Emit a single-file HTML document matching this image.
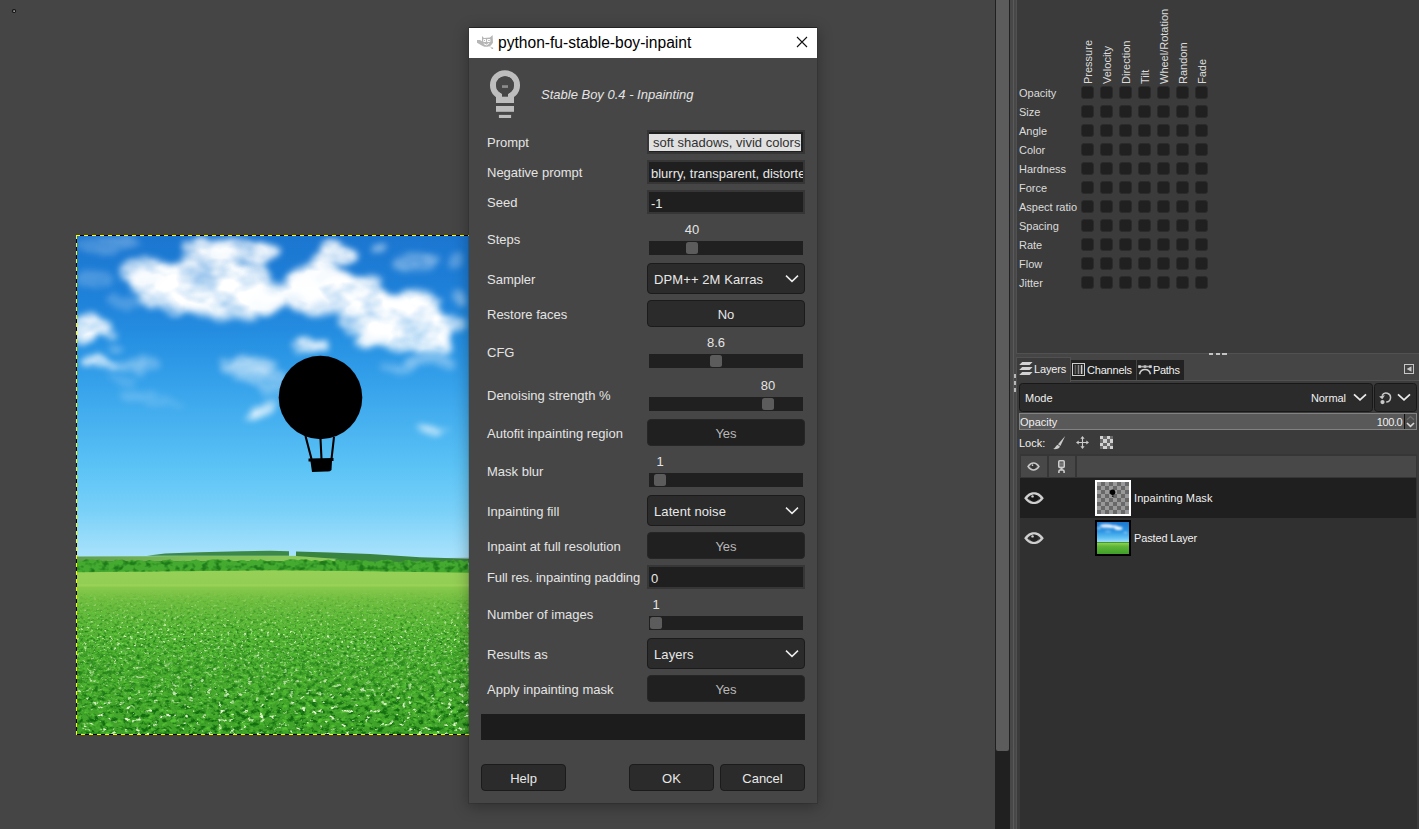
<!DOCTYPE html>
<html>
<head>
<meta charset="utf-8">
<title>python-fu-stable-boy-inpaint</title>
<style>
html,body{margin:0;padding:0;}
body{width:1419px;height:829px;overflow:hidden;background:#454545;position:relative;font-family:"Liberation Sans",sans-serif;font-size:13px;color:#e0e0e0;}
.abs{position:absolute;}
div,span{box-sizing:border-box;}
/* ---------- dialog ---------- */
#dlg{position:absolute;left:469px;top:28px;width:348px;height:775px;background:#464646;box-shadow:0 -1px 0 0 rgba(0,0,0,.35),0 0 0 1px rgba(0,0,0,.10),0 3px 14px 1px rgba(0,0,0,.30);}
#tbar{position:absolute;left:0;top:0;width:348px;height:30px;background:#fff;color:#000;}
#tbar .t{position:absolute;left:29px;top:5px;font-size:15.6px;line-height:20px;white-space:nowrap;color:#000;}
.lbl{position:absolute;left:18px;white-space:nowrap;line-height:16px;height:16px;color:#e4e4e4;}
.ent{position:absolute;left:178px;width:158px;height:24px;background:#1f1f1f;border:2px solid #363636;color:#e8e8e8;overflow:hidden;white-space:nowrap;line-height:23px;padding-left:2px;}
.btn{position:absolute;left:178px;width:158px;height:27px;background:#202020;border:1px solid #262626;border-radius:4px;color:#b8b8b8;text-align:center;line-height:27px;}
.btn.off{background:#2b2b2b;border-color:#1b1b1b;color:#e6e6e6;}
.cmb{position:absolute;left:178px;width:158px;height:31px;background:#2b2b2b;border:1px solid #1b1b1b;border-radius:4px;color:#e8e8e8;line-height:32px;letter-spacing:0.1px;padding-left:6px;white-space:nowrap;}
.cmb svg{position:absolute;right:5px;top:10px;}
.trk{position:absolute;left:180px;width:154px;height:14px;background:#202020;}
.hnd{position:absolute;top:1px;width:12px;height:12px;background:#5c5c5c;border-radius:2.5px;}
.val{position:absolute;width:40px;text-align:center;line-height:16px;height:16px;color:#e4e4e4;}
.dbtn{position:absolute;top:736px;width:85px;height:27px;background:#2b2b2b;border:1px solid #1b1b1b;border-radius:4px;color:#e8e8e8;text-align:center;line-height:28px;}
/* ---------- right dock ---------- */
#dock{position:absolute;left:1017px;top:0;width:402px;height:829px;background:#3b3b3b;}
.dl{position:absolute;left:2px;font-size:11px;line-height:14px;color:#dcdcdc;white-space:nowrap;}
.cb{position:absolute;width:13px;height:13px;background:#202020;border:1px solid #2b2b2b;border-radius:3px;}
.vt{position:absolute;font-size:11px;line-height:14px;color:#dcdcdc;white-space:nowrap;transform-origin:0 0;transform:rotate(-90deg);}
</style>
</head>
<body>
<!-- canvas cursor dot -->
<svg class="abs" style="left:11px;top:8px" width="6" height="6" viewBox="0 0 6 6"><circle cx="3" cy="3" r="2.1" fill="#141414"/><circle cx="3.1" cy="3.1" r="0.85" fill="#c4c4c4"/></svg>
<svg class="abs" style="left:77px;top:236px" width="392" height="498" viewBox="0 0 392 498">
<defs>
<linearGradient id="sky" x1="0" y1="0" x2="0" y2="1">
<stop offset="0" stop-color="#1b76d0"/><stop offset="0.128" stop-color="#1f82da"/><stop offset="0.209" stop-color="#2690e2"/><stop offset="0.289" stop-color="#34a0ea"/>
<stop offset="0.38" stop-color="#48b2f0"/><stop offset="0.47" stop-color="#5dc4f6"/><stop offset="0.55" stop-color="#78d0f8"/><stop offset="0.62" stop-color="#9edefb"/><stop offset="0.645" stop-color="#a8e2fb"/><stop offset="1" stop-color="#a8e2fb"/>
</linearGradient>
<linearGradient id="grs" x1="0" y1="0" x2="0" y2="1">
<stop offset="0" stop-color="#97d057"/><stop offset="0.088" stop-color="#93ce54"/><stop offset="0.097" stop-color="#9dd45b"/><stop offset="0.112" stop-color="#88c94c"/><stop offset="0.188" stop-color="#72bf41"/><stop offset="0.309" stop-color="#5fb738"/><stop offset="0.503" stop-color="#4fae31"/><stop offset="1" stop-color="#3fa229"/>
</linearGradient>
<linearGradient id="ff" x1="0" y1="0" x2="1" y2="0"><stop offset="0" stop-color="#5f9e50"/><stop offset="0.45" stop-color="#7fbe58"/><stop offset="1" stop-color="#90cc5e"/></linearGradient>
<filter id="cl" color-interpolation-filters="sRGB" x="-5%" y="-5%" width="110%" height="110%">
<feTurbulence type="fractalNoise" baseFrequency="0.03" numOctaves="4" seed="4" result="n"/>
<feDisplacementMap in="SourceGraphic" in2="n" scale="20" xChannelSelector="R" yChannelSelector="G" result="d"/>
<feGaussianBlur in="d" stdDeviation="3.2" result="b"/>
<feTurbulence type="fractalNoise" baseFrequency="0.028 0.04" numOctaves="3" seed="9" result="n2"/>
<feColorMatrix in="n2" type="matrix" values="0 0 0 0 1  0 0 0 0 1  0 0 0 0 1  0.9 0 0 0 0.48" result="m"/>
<feComposite in="b" in2="m" operator="in"/>
</filter>
<filter id="gn" color-interpolation-filters="sRGB" x="0" y="0" width="100%" height="100%">
<feTurbulence type="fractalNoise" baseFrequency="0.3 0.42" numOctaves="2" seed="11" result="t"/>
<feColorMatrix in="t" type="matrix" values="0 0 0 0 0.09  0 0 0 0 0.47  0 0 0 0 0.07  0 3.0 0 0 -1.4" result="dk"/>
<feColorMatrix in="t" type="matrix" values="0 0 0 0 0.38  0 0 0 0 0.80  0 0 0 0 0.24  4.0 0 0 0 -2.0" result="lt"/>
<feColorMatrix in="t" type="matrix" values="0 0 0 0 0.86  0 0 0 0 0.95  0 0 0 0 0.76  0 0 6 0 -3.7" result="fw"/>
<feMerge result="mm"><feMergeNode in="dk"/><feMergeNode in="lt"/><feMergeNode in="fw"/></feMerge>
<feComposite in="mm" in2="SourceGraphic" operator="in"/>
</filter>
<filter id="fl" color-interpolation-filters="sRGB" x="0" y="0" width="100%" height="100%">
<feTurbulence type="fractalNoise" baseFrequency="0.17 0.23" numOctaves="3" seed="23" result="t"/>
<feColorMatrix in="t" type="matrix" values="0 0 0 0 0.07  0 0 0 0 0.43  0 0 0 0 0.06  0 4.2 0 0 -1.95" result="dk"/>
<feColorMatrix in="t" type="matrix" values="0 0 0 0 0.33  0 0 0 0 0.76  0 0 0 0 0.20  4.0 0 0 0 -2.15" result="lt"/>
<feColorMatrix in="t" type="matrix" values="0 0 0 0 0.88  0 0 0 0 0.96  0 0 0 0 0.80  0 0 7.5 0 -4.8" result="fw"/>
<feMerge result="mm"><feMergeNode in="dk"/><feMergeNode in="lt"/><feMergeNode in="fw"/></feMerge>
<feComposite in="mm" in2="SourceGraphic" operator="in"/>
</filter>
<filter id="tr" color-interpolation-filters="sRGB" x="0" y="0" width="100%" height="100%">
<feTurbulence type="fractalNoise" baseFrequency="0.16 0.2" numOctaves="2" seed="5" result="t"/>
<feColorMatrix in="t" type="matrix" values="0 0 0 0 0.12  0 0 0 0 0.48  0 0 0 0 0.10  0 3.5 0 0 -1.6"/>
<feComposite in2="SourceGraphic" operator="in"/>
</filter>
<linearGradient id="fade" x1="0" y1="0" x2="0" y2="1"><stop offset="0" stop-color="#fff" stop-opacity="0"/><stop offset="0.04" stop-color="#fff" stop-opacity="0"/><stop offset="0.17" stop-color="#fff" stop-opacity=".4"/><stop offset="0.37" stop-color="#fff" stop-opacity="1"/><stop offset="0.5" stop-color="#fff" stop-opacity=".8"/><stop offset="0.85" stop-color="#fff" stop-opacity=".15"/><stop offset="1" stop-color="#fff" stop-opacity="0"/></linearGradient>
<linearGradient id="fade2" x1="0" y1="0" x2="0" y2="1"><stop offset="0" stop-color="#fff" stop-opacity="0"/><stop offset="0.3" stop-color="#fff" stop-opacity="0"/><stop offset="0.6" stop-color="#fff" stop-opacity=".6"/><stop offset="0.85" stop-color="#fff" stop-opacity="1"/><stop offset="1" stop-color="#fff" stop-opacity="1"/></linearGradient>
<mask id="gm"><rect x="0" y="348" width="392" height="150" fill="url(#fade)"/></mask>
<mask id="gm2"><rect x="0" y="348" width="392" height="150" fill="url(#fade2)"/></mask>
</defs>
<rect width="392" height="498" fill="url(#sky)"/>
<g filter="url(#cl)" fill="#fff"><ellipse cx="83" cy="45" rx="30" ry="16" opacity="0.95"/><ellipse cx="113" cy="51" rx="36" ry="20" opacity="1"/><ellipse cx="145" cy="56" rx="40" ry="20" opacity="1"/><ellipse cx="178" cy="64" rx="30" ry="16" opacity="0.95"/><ellipse cx="128" cy="36" rx="40" ry="14" opacity="0.9"/><ellipse cx="63" cy="34" rx="22" ry="10" opacity="0.7"/><ellipse cx="163" cy="42" rx="34" ry="14" opacity="0.9"/><ellipse cx="193" cy="54" rx="20" ry="14" opacity="0.8"/><ellipse cx="103" cy="64" rx="40" ry="12" opacity="0.75"/><ellipse cx="153" cy="74" rx="40" ry="10" opacity="0.6"/><ellipse cx="128" cy="10" rx="20" ry="7" opacity="0.85"/><ellipse cx="158" cy="14" rx="32" ry="10" opacity="0.95"/><ellipse cx="185" cy="20" rx="18" ry="9" opacity="0.85"/><ellipse cx="138" cy="22" rx="30" ry="8" opacity="0.7"/><ellipse cx="261" cy="18" rx="18" ry="10" opacity="1"/><ellipse cx="248" cy="24" rx="13" ry="8" opacity="0.85"/><ellipse cx="243" cy="48" rx="34" ry="18" opacity="0.95"/><ellipse cx="275" cy="56" rx="30" ry="18" opacity="0.95"/><ellipse cx="223" cy="58" rx="22" ry="16" opacity="0.9"/><ellipse cx="258" cy="70" rx="36" ry="12" opacity="0.8"/><ellipse cx="293" cy="44" rx="14" ry="9" opacity="0.65"/><ellipse cx="235" cy="34" rx="18" ry="10" opacity="0.8"/><ellipse cx="322" cy="82" rx="44" ry="24" opacity="1"/><ellipse cx="298" cy="69" rx="26" ry="14" opacity="0.9"/><ellipse cx="348" cy="94" rx="30" ry="20" opacity="0.95"/><ellipse cx="363" cy="109" rx="16" ry="10" opacity="0.8"/><ellipse cx="308" cy="102" rx="28" ry="12" opacity="0.8"/><ellipse cx="338" cy="64" rx="26" ry="10" opacity="0.75"/><ellipse cx="378" cy="86" rx="12" ry="6" opacity="0.7"/><ellipse cx="353" cy="124" rx="26" ry="8" opacity="0.35"/><ellipse cx="323" cy="132" rx="22" ry="7" opacity="0.25"/><ellipse cx="277" cy="88" rx="18" ry="11" opacity="0.85"/><ellipse cx="291" cy="104" rx="16" ry="8" opacity="0.7"/><ellipse cx="13" cy="92" rx="20" ry="9" opacity="0.95"/><ellipse cx="7" cy="101" rx="11" ry="7" opacity="0.8"/><ellipse cx="33" cy="98" rx="9" ry="5" opacity="0.5"/><ellipse cx="41" cy="113" rx="7" ry="3" opacity="0.4"/><ellipse cx="23" cy="127" rx="20" ry="6" opacity="0.8"/><ellipse cx="11" cy="125" rx="10" ry="5" opacity="0.7"/><ellipse cx="53" cy="126" rx="16" ry="5" opacity="0.35"/><ellipse cx="68" cy="132" rx="14" ry="6" opacity="0.25"/><ellipse cx="239" cy="109" rx="17" ry="7" opacity="0.85"/><ellipse cx="225" cy="114" rx="10" ry="5" opacity="0.5"/><ellipse cx="173" cy="130" rx="26" ry="8" opacity="0.5"/><ellipse cx="185" cy="142" rx="30" ry="9" opacity="0.4"/><ellipse cx="163" cy="122" rx="14" ry="5" opacity="0.45"/><ellipse cx="198" cy="152" rx="18" ry="6" opacity="0.3"/><ellipse cx="182" cy="174" rx="12" ry="5" opacity="0.7"/><ellipse cx="193" cy="168" rx="8" ry="5" opacity="0.45"/><ellipse cx="175" cy="178" rx="8" ry="3" opacity="0.5"/><ellipse cx="351" cy="195" rx="13" ry="6" opacity="0.6"/><ellipse cx="343" cy="191" rx="7" ry="4" opacity="0.4"/><ellipse cx="368" cy="192" rx="8" ry="3" opacity="0.25"/><ellipse cx="303" cy="11" rx="11" ry="6" opacity="0.45"/><ellipse cx="337" cy="28" rx="18" ry="8" opacity="0.35"/><ellipse cx="351" cy="22" rx="10" ry="5" opacity="0.3"/><ellipse cx="378" cy="26" rx="8" ry="10" opacity="0.25"/><ellipse cx="383" cy="64" rx="8" ry="6" opacity="0.4"/><ellipse cx="33" cy="9" rx="30" ry="8" opacity="0.25"/><ellipse cx="18" cy="44" rx="20" ry="10" opacity="0.2"/><ellipse cx="48" cy="64" rx="20" ry="6" opacity="0.2"/><ellipse cx="63" cy="159" rx="22" ry="7" opacity="0.18"/><ellipse cx="88" cy="169" rx="20" ry="5" opacity="0.15"/><ellipse cx="43" cy="144" rx="18" ry="6" opacity="0.15"/></g>
<!-- distant hills -->
<rect x="0" y="322.79999999999995" width="392" height="4" fill="#3f9434"/>
<path d="M0 320.6 L70 320.20000000000005 L150 319.79999999999995 L250 320 L262 325 L0 325 Z" fill="url(#ff)"/>
<path d="M338 322.79999999999995 L392 321.4 L392 324 L338 324 Z" fill="#9fbcc4"/>
<path d="M70 319.79999999999995 L88 317.6 L123 316.20000000000005 L163 315.20000000000005 L193 314.70000000000005 L212 315.29999999999995 L212 319.79999999999995 Z" fill="#3d8842"/>
<path d="M219 315.5 L253 316.5 L293 318 L343 321.20000000000005 L392 322.79999999999995 L392 326 L300 326 L262 323 L219 320 Z" fill="#38833d"/>
<!-- grass -->
<rect x="0" y="333" width="392" height="165" fill="url(#grs)"/>
<rect x="0" y="348" width="392" height="150" fill="#000" filter="url(#gn)" mask="url(#gm)"/>
<rect x="0" y="348" width="392" height="150" fill="#000" filter="url(#fl)" mask="url(#gm2)"/>
<!-- tree line -->
<path id="trp" d="M0.0 336.3 L0.0 324.1 L2.8 325.0 L5.4 324.7 L8.7 323.5 L12.2 323.4 L15.6 323.5 L18.2 324.4 L22.4 323.6 L25.3 324.9 L29.7 324.8 L33.0 325.8 L35.6 325.5 L38.7 323.7 L41.4 324.1 L45.6 323.8 L49.2 325.0 L52.5 324.7 L55.1 323.5 L58.0 325.1 L61.4 324.1 L65.0 324.5 L68.1 325.4 L72.0 323.9 L75.7 324.7 L79.9 325.2 L83.0 325.8 L85.8 324.4 L89.8 323.7 L93.2 323.4 L97.1 325.3 L100.7 325.6 L103.9 325.1 L107.5 324.8 L111.0 325.5 L115.3 324.5 L119.2 323.5 L123.1 325.0 L127.6 325.4 L130.6 324.3 L134.5 323.4 L137.9 323.7 L140.6 323.5 L144.7 323.6 L147.7 324.3 L151.9 323.5 L155.3 324.7 L159.6 325.4 L163.8 324.0 L167.1 324.2 L171.4 325.8 L174.2 323.8 L177.2 323.9 L180.6 324.8 L183.7 323.3 L187.0 324.3 L190.6 325.8 L194.5 324.6 L198.2 325.1 L200.8 325.6 L204.9 325.6 L209.0 324.3 L212.3 323.6 L216.1 323.5 L218.7 323.8 L221.5 324.2 L224.1 323.3 L226.9 323.6 L230.2 323.4 L234.4 324.9 L237.2 324.0 L240.4 324.2 L243.2 325.5 L247.6 324.5 L251.1 323.5 L253.8 324.2 L256.8 325.5 L259.7 323.4 L264.1 324.7 L266.9 324.7 L269.4 324.7 L273.9 325.5 L277.8 324.0 L281.0 323.7 L285.0 324.7 L289.1 324.2 L292.0 325.4 L296.5 325.5 L300.6 325.4 L304.6 323.9 L308.1 324.2 L310.7 323.4 L313.8 324.0 L317.6 325.8 L321.0 325.7 L325.5 325.8 L328.7 323.9 L331.7 323.8 L334.6 324.9 L338.9 325.5 L342.4 325.0 L346.5 323.5 L350.3 325.7 L354.3 325.3 L357.8 323.8 L361.9 324.2 L366.0 325.8 L369.3 324.3 L373.7 325.2 L376.5 323.6 L379.3 325.7 L383.4 323.7 L387.6 325.8 L391.4 324.2 L392.0 336.8 L294.0 335.2 L196.0 334.3 L98.0 335.2 Z" fill="#44ab30"/>
<path d="M0.0 336.3 L0.0 324.1 L2.8 325.0 L5.4 324.7 L8.7 323.5 L12.2 323.4 L15.6 323.5 L18.2 324.4 L22.4 323.6 L25.3 324.9 L29.7 324.8 L33.0 325.8 L35.6 325.5 L38.7 323.7 L41.4 324.1 L45.6 323.8 L49.2 325.0 L52.5 324.7 L55.1 323.5 L58.0 325.1 L61.4 324.1 L65.0 324.5 L68.1 325.4 L72.0 323.9 L75.7 324.7 L79.9 325.2 L83.0 325.8 L85.8 324.4 L89.8 323.7 L93.2 323.4 L97.1 325.3 L100.7 325.6 L103.9 325.1 L107.5 324.8 L111.0 325.5 L115.3 324.5 L119.2 323.5 L123.1 325.0 L127.6 325.4 L130.6 324.3 L134.5 323.4 L137.9 323.7 L140.6 323.5 L144.7 323.6 L147.7 324.3 L151.9 323.5 L155.3 324.7 L159.6 325.4 L163.8 324.0 L167.1 324.2 L171.4 325.8 L174.2 323.8 L177.2 323.9 L180.6 324.8 L183.7 323.3 L187.0 324.3 L190.6 325.8 L194.5 324.6 L198.2 325.1 L200.8 325.6 L204.9 325.6 L209.0 324.3 L212.3 323.6 L216.1 323.5 L218.7 323.8 L221.5 324.2 L224.1 323.3 L226.9 323.6 L230.2 323.4 L234.4 324.9 L237.2 324.0 L240.4 324.2 L243.2 325.5 L247.6 324.5 L251.1 323.5 L253.8 324.2 L256.8 325.5 L259.7 323.4 L264.1 324.7 L266.9 324.7 L269.4 324.7 L273.9 325.5 L277.8 324.0 L281.0 323.7 L285.0 324.7 L289.1 324.2 L292.0 325.4 L296.5 325.5 L300.6 325.4 L304.6 323.9 L308.1 324.2 L310.7 323.4 L313.8 324.0 L317.6 325.8 L321.0 325.7 L325.5 325.8 L328.7 323.9 L331.7 323.8 L334.6 324.9 L338.9 325.5 L342.4 325.0 L346.5 323.5 L350.3 325.7 L354.3 325.3 L357.8 323.8 L361.9 324.2 L366.0 325.8 L369.3 324.3 L373.7 325.2 L376.5 323.6 L379.3 325.7 L383.4 323.7 L387.6 325.8 L391.4 324.2 L392.0 336.8 L294.0 335.2 L196.0 334.3 L98.0 335.2 Z" fill="#000" filter="url(#tr)"/>

<!-- balloon mask -->
<circle cx="243.5" cy="161.5" r="41.8" fill="#000"/>
<path d="M228.5 200 L234.5 223 M243.5 203 L244.5 223 M257 201 L254.5 223" stroke="#000" stroke-width="2.1" fill="none"/>
<path d="M231.5 222.5 L256.5 222 L256.5 225 L255 225 L254.5 234 Q253 236 249 235.5 L235 236 L233.5 225.5 L231.5 225.5 Z" fill="#000"/>
</svg>
<svg class="abs" style="left:76px;top:235px" width="393" height="500" viewBox="0 0 393 500" shape-rendering="crispEdges"><path d="M393 0.5 H0.5 V499.5 H393" fill="none" stroke="#000" stroke-width="1"/><path d="M0 0.5 H393" fill="none" stroke="#ffff00" stroke-width="1" stroke-dasharray="4 4"/><path d="M0.5 0 V499.5 H393" fill="none" stroke="#ffff00" stroke-width="1" stroke-dasharray="4 4"/></svg>
<!-- canvas scrollbar -->
<div class="abs" style="left:995px;top:0;width:15px;height:829px;background:#202020;"></div>
<div class="abs" style="left:996px;top:0;width:13px;height:751px;background:#5c5c5c;border-radius:0 0 2px 2px;"></div>
<div class="abs" style="left:1010px;top:0;width:7px;height:829px;background:#484848;"></div>
<div class="abs" style="left:1013px;top:0;width:1px;height:829px;background:#5a5a5a;"></div>
<div class="abs" style="left:1016px;top:0;width:1px;height:354px;background:#555;"></div>
<div class="abs" style="left:1016px;top:354px;width:1px;height:3px;background:#454545;"></div>
<div class="abs" style="left:1016px;top:357px;width:1px;height:472px;background:#515151;"></div>
<!-- RIGHT DOCK -->
<div id="dock">
<div class="abs" style="left:-1px;top:0;width:1px;height:354px;background:#515151"></div>
<div class="abs" style="left:0;top:353px;width:402px;height:1px;background:#515151"></div>
<div class="vt" style="left:64px;top:84px">Pressure</div>
<div class="vt" style="left:83px;top:84px">Velocity</div>
<div class="vt" style="left:102px;top:84px">Direction</div>
<div class="vt" style="left:121px;top:84px">Tilt</div>
<div class="vt" style="left:140px;top:84px">Wheel/Rotation</div>
<div class="vt" style="left:159px;top:84px">Random</div>
<div class="vt" style="left:178px;top:84px">Fade</div>
<div class="dl" style="top:86px">Opacity</div><div class="cb" style="left:64px;top:86px"></div><div class="cb" style="left:83px;top:86px"></div><div class="cb" style="left:102px;top:86px"></div><div class="cb" style="left:121px;top:86px"></div><div class="cb" style="left:140px;top:86px"></div><div class="cb" style="left:159px;top:86px"></div><div class="cb" style="left:178px;top:86px"></div>
<div class="dl" style="top:105px">Size</div><div class="cb" style="left:64px;top:105px"></div><div class="cb" style="left:83px;top:105px"></div><div class="cb" style="left:102px;top:105px"></div><div class="cb" style="left:121px;top:105px"></div><div class="cb" style="left:140px;top:105px"></div><div class="cb" style="left:159px;top:105px"></div><div class="cb" style="left:178px;top:105px"></div>
<div class="dl" style="top:124px">Angle</div><div class="cb" style="left:64px;top:124px"></div><div class="cb" style="left:83px;top:124px"></div><div class="cb" style="left:102px;top:124px"></div><div class="cb" style="left:121px;top:124px"></div><div class="cb" style="left:140px;top:124px"></div><div class="cb" style="left:159px;top:124px"></div><div class="cb" style="left:178px;top:124px"></div>
<div class="dl" style="top:143px">Color</div><div class="cb" style="left:64px;top:143px"></div><div class="cb" style="left:83px;top:143px"></div><div class="cb" style="left:102px;top:143px"></div><div class="cb" style="left:121px;top:143px"></div><div class="cb" style="left:140px;top:143px"></div><div class="cb" style="left:159px;top:143px"></div><div class="cb" style="left:178px;top:143px"></div>
<div class="dl" style="top:162px">Hardness</div><div class="cb" style="left:64px;top:162px"></div><div class="cb" style="left:83px;top:162px"></div><div class="cb" style="left:102px;top:162px"></div><div class="cb" style="left:121px;top:162px"></div><div class="cb" style="left:140px;top:162px"></div><div class="cb" style="left:159px;top:162px"></div><div class="cb" style="left:178px;top:162px"></div>
<div class="dl" style="top:181px">Force</div><div class="cb" style="left:64px;top:181px"></div><div class="cb" style="left:83px;top:181px"></div><div class="cb" style="left:102px;top:181px"></div><div class="cb" style="left:121px;top:181px"></div><div class="cb" style="left:140px;top:181px"></div><div class="cb" style="left:159px;top:181px"></div><div class="cb" style="left:178px;top:181px"></div>
<div class="dl" style="top:200px">Aspect ratio</div><div class="cb" style="left:64px;top:200px"></div><div class="cb" style="left:83px;top:200px"></div><div class="cb" style="left:102px;top:200px"></div><div class="cb" style="left:121px;top:200px"></div><div class="cb" style="left:140px;top:200px"></div><div class="cb" style="left:159px;top:200px"></div><div class="cb" style="left:178px;top:200px"></div>
<div class="dl" style="top:219px">Spacing</div><div class="cb" style="left:64px;top:219px"></div><div class="cb" style="left:83px;top:219px"></div><div class="cb" style="left:102px;top:219px"></div><div class="cb" style="left:121px;top:219px"></div><div class="cb" style="left:140px;top:219px"></div><div class="cb" style="left:159px;top:219px"></div><div class="cb" style="left:178px;top:219px"></div>
<div class="dl" style="top:238px">Rate</div><div class="cb" style="left:64px;top:238px"></div><div class="cb" style="left:83px;top:238px"></div><div class="cb" style="left:102px;top:238px"></div><div class="cb" style="left:121px;top:238px"></div><div class="cb" style="left:140px;top:238px"></div><div class="cb" style="left:159px;top:238px"></div><div class="cb" style="left:178px;top:238px"></div>
<div class="dl" style="top:257px">Flow</div><div class="cb" style="left:64px;top:257px"></div><div class="cb" style="left:83px;top:257px"></div><div class="cb" style="left:102px;top:257px"></div><div class="cb" style="left:121px;top:257px"></div><div class="cb" style="left:140px;top:257px"></div><div class="cb" style="left:159px;top:257px"></div><div class="cb" style="left:178px;top:257px"></div>
<div class="dl" style="top:276px">Jitter</div><div class="cb" style="left:64px;top:276px"></div><div class="cb" style="left:83px;top:276px"></div><div class="cb" style="left:102px;top:276px"></div><div class="cb" style="left:121px;top:276px"></div><div class="cb" style="left:140px;top:276px"></div><div class="cb" style="left:159px;top:276px"></div><div class="cb" style="left:178px;top:276px"></div>
<div class="abs" style="left:0;top:354px;width:402px;height:27px;background:#454545"></div>
<div class="abs" style="left:192.0px;top:353px;width:4.4px;height:2px;background:#c4c4c4"></div><div class="abs" style="left:198.7px;top:353px;width:4.4px;height:2px;background:#c4c4c4"></div><div class="abs" style="left:205.4px;top:353px;width:4.4px;height:2px;background:#c4c4c4"></div>
<div class="abs" style="left:-1px;top:357px;width:55px;height:25px;background:#3b3b3b;border:1px solid #515151;border-bottom:none"></div>
<div class="abs" style="left:54px;top:360px;width:65px;height:20px;background:#222"></div>
<div class="abs" style="left:120px;top:360px;width:47px;height:20px;background:#222"></div>
<div class="abs" style="left:54px;top:380px;width:348px;height:1px;background:#515151"></div>
<svg class="abs" style="left:2px;top:361px" width="14" height="15" viewBox="0 0 14 15"><path d="M3.2 1 L13.6 1 L10.6 4 L0.2 4 Z M3.2 6 L13.6 6 L10.6 9 L0.2 9 Z M3.2 11 L13.6 11 L10.6 14 L0.2 14 Z" fill="#d2d2d2"/></svg>
<div class="dl" style="left:17px;top:362px;color:#f0f0f0;letter-spacing:-0.15px">Layers</div>
<svg class="abs" style="left:55px;top:363px" width="13" height="13" viewBox="0 0 13 13"><rect x="0.5" y="0.5" width="12" height="12" fill="none" stroke="#cfcfcf"/><rect x="2.6" y="2" width="1.6" height="9" fill="#5e5e5e"/><rect x="5.7" y="2" width="1.6" height="9" fill="#8c8c8c"/><rect x="8.8" y="2" width="1.6" height="9" fill="#cfcfcf"/></svg>
<div class="dl" style="left:70px;top:363px;color:#f0f0f0;letter-spacing:-0.2px">Channels</div>
<svg class="abs" style="left:121px;top:365px" width="14" height="10" viewBox="0 0 14 10"><path d="M1 1.6 L13 1.6" stroke="#a8a8a8" stroke-width="1.7"/><rect x="0.2" y="0.3" width="2.6" height="2.6" fill="#d0d0d0"/><rect x="11.2" y="0.3" width="2.6" height="2.6" fill="#d0d0d0"/><rect x="5.7" y="0.3" width="2.6" height="2.6" fill="#bdbdbd"/><path d="M1.5 9.2 C3 3.0 11 3.0 12.5 9.2" fill="none" stroke="#d0d0d0" stroke-width="1.6"/></svg>
<div class="dl" style="left:136px;top:363px;color:#f0f0f0;letter-spacing:-0.3px">Paths</div>
<svg class="abs" style="left:387px;top:364px" width="10" height="10" viewBox="0 0 10 10"><rect x="0.5" y="0.5" width="9" height="9" fill="none" stroke="#c6c6c6"/><path d="M7.5 2.2 L7.5 7.8 L2.6 5 Z" fill="#c6c6c6"/></svg>
<div class="abs" style="left:-3px;top:374px;width:2px;height:4px;background:#b8b8b8"></div><div class="abs" style="left:-3px;top:381px;width:2px;height:4px;background:#b8b8b8"></div><div class="abs" style="left:-3px;top:388px;width:2px;height:4px;background:#b8b8b8"></div>
<div class="abs" style="left:2px;top:383px;width:354px;height:29px;background:#2b2b2b;border:1px solid #181818;border-radius:3.5px"></div>
<div class="dl" style="left:8px;top:391px;color:#f0f0f0">Mode</div>
<div class="dl" style="left:294px;top:391px;color:#f0f0f0;letter-spacing:-0.1px">Normal</div>
<svg class="abs" style="left:336px;top:393px" width="14" height="9" viewBox="0 0 14 9"><path d="M1 1.3 L7 6.9 L13 1.3" fill="none" stroke="#ececec" stroke-width="1.7"/></svg>
<div class="abs" style="left:357px;top:383px;width:43px;height:29px;background:#2b2b2b;border:1px solid #181818;border-radius:3.5px"></div>
<svg class="abs" style="left:362px;top:392px" width="13" height="13" viewBox="0 0 13 13"><path d="M3.0 3.6 A4.5 4.5 0 1 1 7.2 10.1" fill="none" stroke="#c8c8c8" stroke-width="1.5"/><path d="M0.1 4.4 L5.9 3.3 L3.3 7.2 Z" fill="#c8c8c8"/><circle cx="3.5" cy="10.1" r="2.1" fill="#c8c8c8"/></svg>
<svg class="abs" style="left:380px;top:393px" width="14" height="9" viewBox="0 0 14 9"><path d="M1 1.3 L7 6.9 L13 1.3" fill="none" stroke="#ececec" stroke-width="1.7"/></svg>
<div class="abs" style="left:2px;top:413px;width:398px;height:17px;background:#595959;border:1px solid #828282"></div>
<div class="abs" style="left:387px;top:414px;width:1px;height:15px;background:#121212"></div>
<div class="abs" style="left:388px;top:414px;width:11px;height:15px;background:#4c4c4c"></div>
<svg class="abs" style="left:389px;top:415px" width="9" height="13" viewBox="0 0 9 13"><path d="M1 4.8 L4.5 1.6 L8 4.8" fill="none" stroke="#6c6c6c" stroke-width="1.4"/><path d="M1 8 L4.5 11.4 L8 8" fill="none" stroke="#d4d4d4" stroke-width="1.6"/></svg>
<div class="dl" style="left:3px;top:415px;color:#f0f0f0">Opacity</div>
<div class="dl" style="left:345.3px;width:40px;text-align:right;top:414.6px;color:#f0f0f0;letter-spacing:-0.4px">100.0</div>
<div class="dl" style="left:2px;top:436px;color:#f0f0f0">Lock:</div>
<svg class="abs" style="left:36px;top:436px" width="13" height="14" viewBox="0 0 13 14"><path d="M12.2 0.1 L7.4 9.9 L5.0 8.3 Z" fill="#cbcbcb"/><path d="M4.5 8.8 L6.9 10.5 C6.4 12.6 3.6 13.6 0.1 13.1 C2.2 12.2 2.6 10.0 4.5 8.8 Z" fill="#cbcbcb"/></svg>
<svg class="abs" style="left:59px;top:436px" width="13" height="13" viewBox="0 0 13 13"><path d="M6.5 1.5 V11.5 M1.5 6.5 H11.5" stroke="#cbcbcb" stroke-width="1.1" fill="none"/><path d="M6.5 0 L8.6 2.7 H4.4 Z M6.5 13 L8.6 10.3 H4.4 Z M0 6.5 L2.7 4.4 V8.6 Z M13 6.5 L10.3 4.4 V8.6 Z" fill="#cbcbcb"/></svg>
<svg class="abs" style="left:83px;top:436px" width="13" height="13" viewBox="0 0 13 13" shape-rendering="crispEdges"><rect width="13" height="13" fill="#696969"/><rect x="0" y="0" width="3" height="3" fill="#d2d2d2"/><rect x="0" y="7" width="3" height="3" fill="#d2d2d2"/><rect x="3" y="3" width="4" height="4" fill="#d2d2d2"/><rect x="3" y="10" width="4" height="3" fill="#d2d2d2"/><rect x="7" y="0" width="3" height="3" fill="#d2d2d2"/><rect x="7" y="7" width="3" height="3" fill="#d2d2d2"/><rect x="10" y="3" width="3" height="4" fill="#d2d2d2"/><rect x="10" y="10" width="3" height="3" fill="#d2d2d2"/></svg>
<div class="abs" style="left:3px;top:454px;width:397px;height:375px;background:#303030"></div>
<div class="abs" style="left:3px;top:454px;width:397px;height:24px;background:#363636"></div>
<div class="abs" style="left:4px;top:456px;width:26px;height:21px;background:#484848"></div>
<div class="abs" style="left:32px;top:456px;width:26px;height:21px;background:#484848"></div>
<div class="abs" style="left:60px;top:456px;width:339px;height:21px;background:#484848"></div>
<svg class="abs" style="left:10px;top:462px" width="13" height="9" viewBox="0 0 20 13" preserveAspectRatio="none"><path d="M0.2 6.6 C3 2 6.5 0.3 10 0.3 C13.5 0.3 17 2 19.8 6.6 C17 11 13.5 12.7 10 12.7 C6.5 12.7 3 11 0.2 6.6 Z M3.3 6.6 C5.0 9.2 7.4 10.2 10 10.2 C12.6 10.2 15.0 9.2 16.7 6.6 C15.0 4.0 12.6 2.9 10 2.9 C7.4 2.9 5.0 4.0 3.3 6.6 Z" fill="#c8c8c8" fill-rule="evenodd"/><circle cx="10" cy="6.4" r="3.9" fill="#333"/><path d="M5.6 8.0 A4.7 4.7 0 0 0 14.4 8.0" fill="none" stroke="#c8c8c8" stroke-width="0.9" opacity=".55"/><circle cx="8.5" cy="4.6" r="1.25" fill="#c8c8c8"/></svg>
<svg class="abs" style="left:41px;top:460px" width="7" height="13" viewBox="0 0 7 13"><rect x="0.8" y="0.8" width="5.4" height="6.6" rx="0.9" fill="none" stroke="#cdcdcd" stroke-width="1.6"/><path d="M2.85 2.4 V5.8 M4.15 2.4 V5.8" stroke="#b4b4b4" stroke-width="0.7"/><path d="M3.5 7.6 V10.2" stroke="#cdcdcd" stroke-width="2.2"/><path d="M0.9 13 V11.4 Q0.9 10 2.3 10 H4.7 Q6.1 10 6.1 11.4 V13" fill="none" stroke="#cdcdcd" stroke-width="1.6"/></svg>
<div class="abs" style="left:3px;top:478px;width:396px;height:40px;background:#1f1f1f"></div>
<svg class="abs" style="left:7px;top:492px" width="20" height="12.4" viewBox="0 0 20 13" preserveAspectRatio="none"><path d="M0.2 6.6 C3 2 6.5 0.3 10 0.3 C13.5 0.3 17 2 19.8 6.6 C17 11 13.5 12.7 10 12.7 C6.5 12.7 3 11 0.2 6.6 Z M3.3 6.6 C5.0 9.2 7.4 10.2 10 10.2 C12.6 10.2 15.0 9.2 16.7 6.6 C15.0 4.0 12.6 2.9 10 2.9 C7.4 2.9 5.0 4.0 3.3 6.6 Z" fill="#cfcfcf" fill-rule="evenodd"/><circle cx="10" cy="6.4" r="3.9" fill="#161616"/><path d="M5.6 8.0 A4.7 4.7 0 0 0 14.4 8.0" fill="none" stroke="#cfcfcf" stroke-width="0.9" opacity=".55"/><circle cx="8.5" cy="4.6" r="1.25" fill="#cfcfcf"/></svg>
<svg class="abs" style="left:7px;top:532px" width="20" height="12.4" viewBox="0 0 20 13" preserveAspectRatio="none"><path d="M0.2 6.6 C3 2 6.5 0.3 10 0.3 C13.5 0.3 17 2 19.8 6.6 C17 11 13.5 12.7 10 12.7 C6.5 12.7 3 11 0.2 6.6 Z M3.3 6.6 C5.0 9.2 7.4 10.2 10 10.2 C12.6 10.2 15.0 9.2 16.7 6.6 C15.0 4.0 12.6 2.9 10 2.9 C7.4 2.9 5.0 4.0 3.3 6.6 Z" fill="#cfcfcf" fill-rule="evenodd"/><circle cx="10" cy="6.4" r="3.9" fill="#222"/><path d="M5.6 8.0 A4.7 4.7 0 0 0 14.4 8.0" fill="none" stroke="#cfcfcf" stroke-width="0.9" opacity=".55"/><circle cx="8.5" cy="4.6" r="1.25" fill="#cfcfcf"/></svg>
<svg class="abs" style="left:78px;top:480px" width="36" height="36" viewBox="0 0 36 36"><rect width="36" height="36" fill="#fff"/><rect x="2" y="2" width="32" height="32" fill="#999"/><rect x="2" y="6" width="4" height="4" fill="#686868"/><rect x="2" y="14" width="4" height="4" fill="#686868"/><rect x="2" y="22" width="4" height="4" fill="#686868"/><rect x="2" y="30" width="4" height="4" fill="#686868"/><rect x="6" y="2" width="4" height="4" fill="#686868"/><rect x="6" y="10" width="4" height="4" fill="#686868"/><rect x="6" y="18" width="4" height="4" fill="#686868"/><rect x="6" y="26" width="4" height="4" fill="#686868"/><rect x="10" y="6" width="4" height="4" fill="#686868"/><rect x="10" y="14" width="4" height="4" fill="#686868"/><rect x="10" y="22" width="4" height="4" fill="#686868"/><rect x="10" y="30" width="4" height="4" fill="#686868"/><rect x="14" y="2" width="4" height="4" fill="#686868"/><rect x="14" y="10" width="4" height="4" fill="#686868"/><rect x="14" y="18" width="4" height="4" fill="#686868"/><rect x="14" y="26" width="4" height="4" fill="#686868"/><rect x="18" y="6" width="4" height="4" fill="#686868"/><rect x="18" y="14" width="4" height="4" fill="#686868"/><rect x="18" y="22" width="4" height="4" fill="#686868"/><rect x="18" y="30" width="4" height="4" fill="#686868"/><rect x="22" y="2" width="4" height="4" fill="#686868"/><rect x="22" y="10" width="4" height="4" fill="#686868"/><rect x="22" y="18" width="4" height="4" fill="#686868"/><rect x="22" y="26" width="4" height="4" fill="#686868"/><rect x="26" y="6" width="4" height="4" fill="#686868"/><rect x="26" y="14" width="4" height="4" fill="#686868"/><rect x="26" y="22" width="4" height="4" fill="#686868"/><rect x="26" y="30" width="4" height="4" fill="#686868"/><rect x="30" y="2" width="4" height="4" fill="#686868"/><rect x="30" y="10" width="4" height="4" fill="#686868"/><rect x="30" y="18" width="4" height="4" fill="#686868"/><rect x="30" y="26" width="4" height="4" fill="#686868"/><circle cx="17.6" cy="12.2" r="2.7" fill="#000"/><rect x="16.9" y="15.4" width="1.6" height="1.5" fill="#111"/></svg>
<div class="dl" style="left:117px;top:491px;color:#f0f0f0;letter-spacing:0.1px">Inpainting Mask</div>
<svg class="abs" style="left:78px;top:520px" width="36" height="36" viewBox="0 0 36 36"><defs><linearGradient id="tg" x1="0" y1="0" x2="0" y2="1"><stop offset="0" stop-color="#1b77d0"/><stop offset="0.3" stop-color="#2e97e5"/><stop offset="0.5" stop-color="#62c2f3"/><stop offset="0.635" stop-color="#a4def8"/><stop offset="0.64" stop-color="#3d9a2e"/><stop offset="0.665" stop-color="#3d9a2e"/><stop offset="0.67" stop-color="#8ccb4e"/><stop offset="0.76" stop-color="#5fb638"/><stop offset="1" stop-color="#3f9f29"/></linearGradient><filter id="tb" x="-20%" y="-20%" width="140%" height="140%"><feGaussianBlur stdDeviation="0.9"/></filter></defs><rect width="36" height="36" fill="#000"/><rect x="2" y="2" width="32" height="32" fill="url(#tg)"/><g filter="url(#tb)" fill="#fff"><ellipse cx="11" cy="5.8" rx="6" ry="1.9" opacity=".85"/><ellipse cx="18" cy="6.5" rx="5" ry="1.6" opacity=".8"/><ellipse cx="23.5" cy="8.3" rx="4" ry="1.8" opacity=".9"/><ellipse cx="30.5" cy="12.5" rx="2" ry="0.8" opacity=".6"/><ellipse cx="4" cy="8.2" rx="1.6" ry="1" opacity=".7"/><ellipse cx="13" cy="11.5" rx="3" ry="0.9" opacity=".35"/></g></svg>
<div class="dl" style="left:117px;top:531px;color:#f0f0f0;letter-spacing:-0.15px">Pasted Layer</div>
</div>
<!-- DIALOG -->
<div id="dlg">
<div id="tbar"><svg class="abs" style="left:7px;top:6px" width="18" height="16" viewBox="0 0 18 16">
<path d="M1 6 L4 6 L6 7.2 L6 2.1 L7.9 4 L13.9 3.6 L16.6 0.9 L17 8.8 L14.9 11.6 L11.7 12.7 L8.4 12.7 L6.2 11.7 L2.3 9.6 L1 8.8 Z" fill="#b6b6b6"/>
<rect x="7.2" y="5" width="2.9" height="3" rx="0.7" fill="#fff"/><rect x="11" y="5" width="3.4" height="3" rx="0.7" fill="#fff"/>
<circle cx="8.5" cy="6.5" r="0.55" fill="#a8a8a8"/><rect x="12.1" y="6.1" width="1.7" height="0.8" fill="#a8a8a8"/>
<path d="M7.8 9.8 Q10.2 12.4 13.2 9.3" stroke="#fff" stroke-width="1" fill="none"/>
<path d="M12.2 11.3 L16.4 14.5" stroke="#b0b0b0" stroke-width="1" stroke-dasharray="1.1 0.6" fill="none"/>
<rect x="15.6" y="13.5" width="1.5" height="1.5" fill="#b6b6b6"/>
</svg>
<span class="t">python-fu-stable-boy-inpaint</span><svg class="abs" style="left:327px;top:8px" width="12" height="12" viewBox="0 0 12 12"><path d="M1 1 L11 11 M11 1 L1 11" stroke="#111" stroke-width="1.1" fill="none"/></svg>
</div>
<svg class="abs" style="left:20px;top:42px" width="32" height="49" viewBox="0 0 32 49">
<circle cx="16" cy="15.2" r="12" fill="none" stroke="#bdbdbd" stroke-width="6.1"/>
<rect x="7" y="24" width="18" height="9" fill="#bdbdbd"/>
<rect x="13" y="20" width="6" height="6.7" fill="#464646"/>
<circle cx="16" cy="15.2" r="8.95" fill="#464646"/>
<rect x="13" y="15.2" width="6" height="2.7" fill="#8c8c8c"/>
<rect x="7" y="36" width="18" height="5.8" fill="#bdbdbd"/>
<rect x="9.9" y="44.9" width="12.2" height="3.1" fill="#bdbdbd"/>
</svg>
<div class="abs" style="left:72px;top:59px;font-style:italic;font-size:13px;line-height:16px;white-space:nowrap;color:#e4e4e4">Stable Boy 0.4 - Inpainting</div>
<div class="lbl" style="top:107px">Prompt</div>
<div class="ent" style="top:102px"><span style="position:absolute;left:0;top:2px;width:152px;height:17px;background:#e0e0e0;color:#303030;line-height:17px;padding-left:4px;overflow:hidden;white-space:nowrap">soft shadows, vivid colors</span></div>
<div class="lbl" style="top:137px">Negative prompt</div>
<div class="ent" style="top:132px">blurry, transparent, distorted</div>
<div class="lbl" style="top:167px">Seed</div>
<div class="ent" style="top:162px">-1</div>
<div class="lbl" style="top:204px">Steps</div>
<div class="val" style="left:203px;top:194px">40</div>
<div class="trk" style="top:213px"><div class="hnd" style="left:37px"></div></div>
<div class="lbl" style="top:244px">Sampler</div>
<div class="cmb" style="top:235px">DPM++ 2M Karras<svg width="14" height="10" viewBox="0 0 14 10"><path d="M1 1.6 L7 7.4 L13 1.6" fill="none" stroke="#ececec" stroke-width="1.5"/></svg></div>
<div class="lbl" style="top:279px">Restore faces</div>
<div class="btn off" style="top:272px">No</div>
<div class="lbl" style="top:317px">CFG</div>
<div class="val" style="left:227px;top:307px">8.6</div>
<div class="trk" style="top:326px"><div class="hnd" style="left:61px"></div></div>
<div class="lbl" style="top:360px">Denoising strength %</div>
<div class="val" style="left:279px;top:350px">80</div>
<div class="trk" style="top:369px"><div class="hnd" style="left:113px"></div></div>
<div class="lbl" style="top:398px">Autofit inpainting region</div>
<div class="btn" style="top:391px">Yes</div>
<div class="lbl" style="top:436px">Mask blur</div>
<div class="val" style="left:171px;top:426px">1</div>
<div class="trk" style="top:445px"><div class="hnd" style="left:5px"></div></div>
<div class="lbl" style="top:476px">Inpainting fill</div>
<div class="cmb" style="top:467px">Latent noise<svg width="14" height="10" viewBox="0 0 14 10"><path d="M1 1.6 L7 7.4 L13 1.6" fill="none" stroke="#ececec" stroke-width="1.5"/></svg></div>
<div class="lbl" style="top:511px">Inpaint at full resolution</div>
<div class="btn" style="top:504px">Yes</div>
<div class="lbl" style="top:542px"><span style="letter-spacing:-0.08px">Full res. inpainting padding</span></div>
<div class="ent" style="top:537px">0</div>
<div class="lbl" style="top:579px">Number of images</div>
<div class="val" style="left:167px;top:569px">1</div>
<div class="trk" style="top:588px"><div class="hnd" style="left:1px"></div></div>
<div class="lbl" style="top:619px">Results as</div>
<div class="cmb" style="top:610px">Layers<svg width="14" height="10" viewBox="0 0 14 10"><path d="M1 1.6 L7 7.4 L13 1.6" fill="none" stroke="#ececec" stroke-width="1.5"/></svg></div>
<div class="lbl" style="top:654px">Apply inpainting mask</div>
<div class="btn" style="top:647px">Yes</div>
<div class="abs" style="left:12px;top:686px;width:324px;height:26px;background:#1c1c1c"></div>
<div class="dbtn" style="left:12px">Help</div>
<div class="dbtn" style="left:160px">OK</div>
<div class="dbtn" style="left:251px">Cancel</div>
</div>
</body>
</html>
